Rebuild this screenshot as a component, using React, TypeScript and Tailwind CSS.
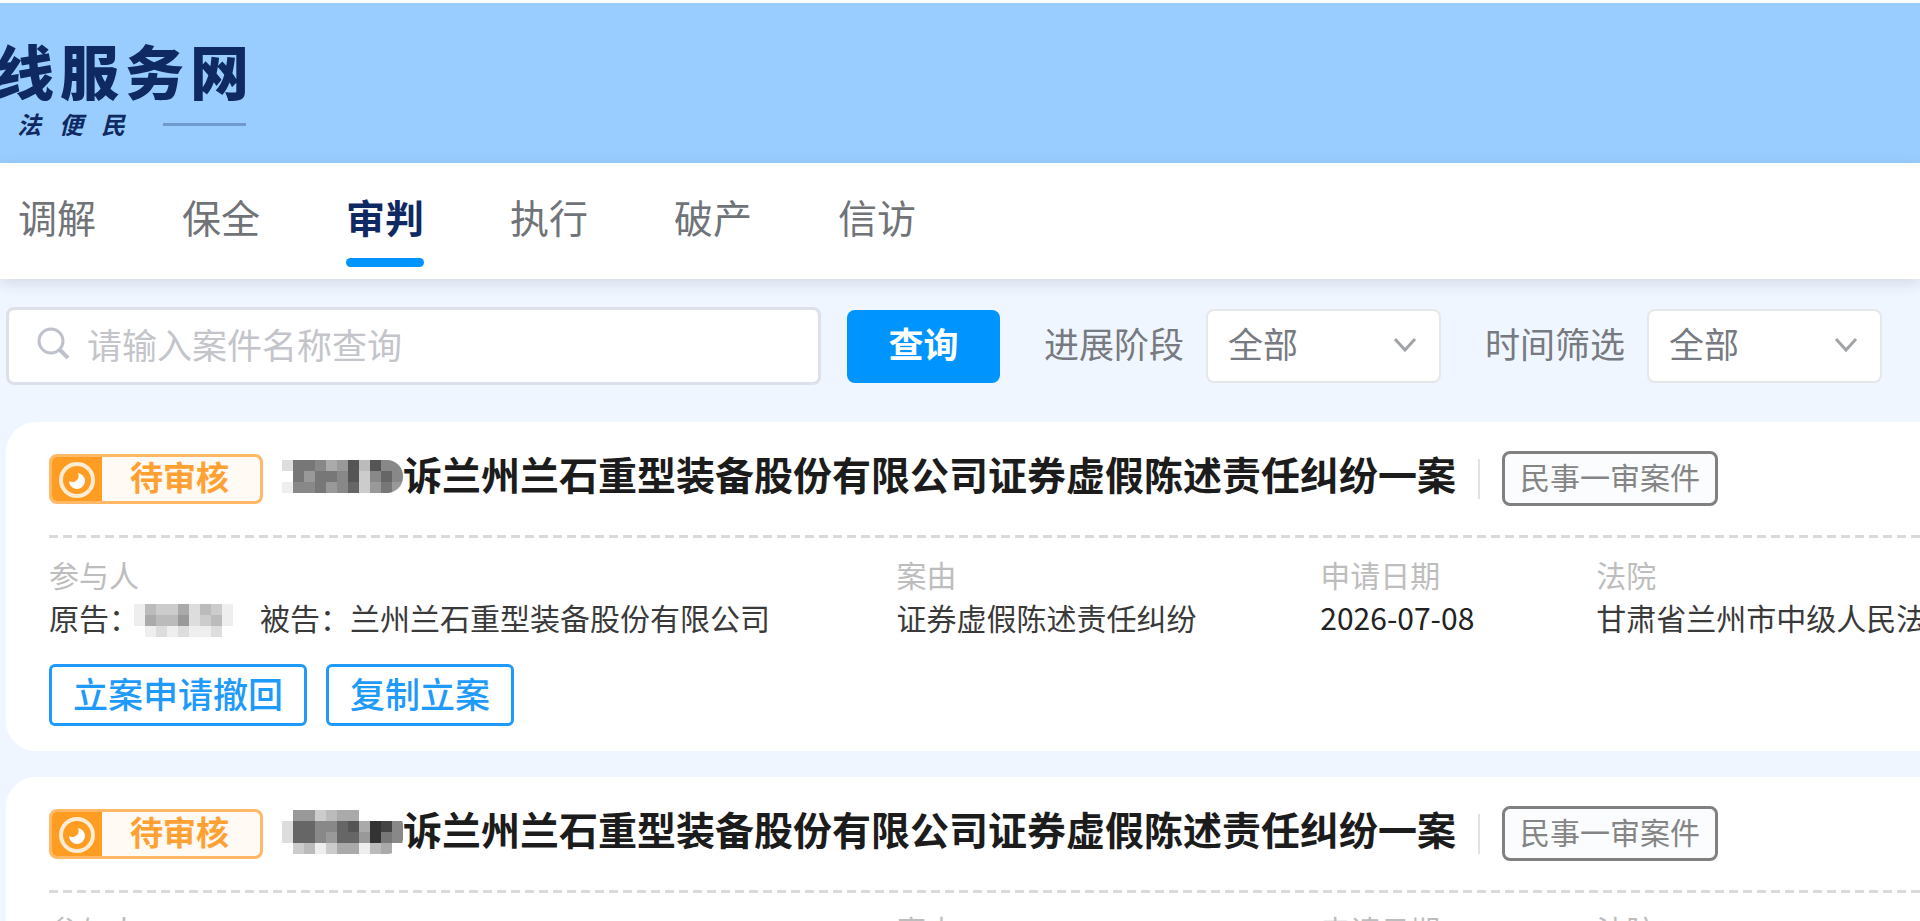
import { useState, type FormEvent } from 'react';

const TABS = ['调解', '保全', '审判', '执行', '破产', '信访'];

type Case = {
  id: number;
  title: string;
  status: string;
  kind: string;
  defendant: string;
  cause: string;
  date: string;
  court: string;
  titleMask: string[];
  nameMask: string[];
};

// each character is one block, 0 = darkest, f = white
const TITLE_MASK_1 = ['d778a95b588', 'f797785c868', 'e887986c979'];
const TITLE_MASK_2 = ['f99cbaaffff', 'd668865a348', 'd6689669378', 'fcbecaaebaf'];
const NAME_MASK = ['ebccadbcef', 'eabb9dcbef', 'fededeedff'];

const BASE = {
  status: '待审核',
  title: '诉兰州兰石重型装备股份有限公司证券虚假陈述责任纠纷一案',
  kind: '民事一审案件',
  defendant: '兰州兰石重型装备股份有限公司',
  cause: '证券虚假陈述责任纠纷',
  date: '2026-07-08',
  court: '甘肃省兰州市中级人民法院',
  nameMask: NAME_MASK,
};

const CASES: Case[] = [
  { ...BASE, id: 1, titleMask: TITLE_MASK_1 },
  { ...BASE, id: 2, titleMask: TITLE_MASK_2 },
];

const CELL = 11;

const MaskedName = ({ rows, className }: { rows: string[]; className: string }) => (
  <svg
    className={className}
    viewBox={`0 0 ${rows[0].length} ${rows.length}`}
    width={rows[0].length * CELL}
    height={rows.length * CELL}
    shapeRendering="crispEdges"
    aria-hidden="true"
  >
    {rows.map((row, y) =>
      row.split('').map((c, x) => <rect key={`${x}-${y}`} x={x} y={y} width="1" height="1" fill={`#${c}${c}${c}`} />)
    )}
  </svg>
);

const StatusBadge = ({ text }: { text: string }) => (
  <span className="flex h-[50px] w-[214px] shrink-0 overflow-hidden rounded-lg border-3 border-[#ffb866] bg-[#fffaf3]">
    <span className="-m-[3px] flex w-[53px] items-center justify-center bg-[#ff9c22]">
      <svg width="40" height="40" viewBox="0 0 40 40" fill="none">
        <circle cx="21" cy="21" r="16" stroke="#ffecd2" strokeWidth="4" />
        <path d="M22 14a8 8 0 1 1-9 8c3 2 6 1 8-1 2-2 2-4 1-7z" fill="#fff" />
      </svg>
    </span>
    <span className="flex flex-1 items-center justify-center pb-[4px] text-[33px] leading-none font-bold text-[#ffa033]">{text}</span>
  </span>
);

const FilterSelect = ({ id, label }: { id: string; label: string }) => (
  <div className="flex items-center gap-[22px]">
    <label htmlFor={id} className="pb-[6px] whitespace-nowrap text-[#777a80]">{label}</label>
    <div className="relative">
      <select
        id={id}
        className="h-[74px] w-[235px] appearance-none rounded-lg border-2 border-[#e6e7e9] bg-white pb-[6px] pl-[20px] text-[#777a80] outline-none"
      >
        <option>全部</option>
      </select>
      <svg className="pointer-events-none absolute top-[28px] right-[24px]" width="24" height="16" viewBox="0 0 24 16" fill="none">
        <path d="M2 2l10 11L22 2" stroke="#a0a3a8" strokeWidth="3" />
      </svg>
    </div>
  </div>
);

const CaseCard = ({ item }: { item: Case }) => (
  <article className="h-[329px] overflow-hidden rounded-l-[30px] bg-white pt-[29px] pl-[43px]">
    <div className="flex h-[55px] items-center">
      <StatusBadge text={item.status} />
      <h2 className="ml-[19px] flex items-center pb-[12px] text-[39px] leading-[48px] font-bold whitespace-nowrap text-[#1c1c1c]">
        <MaskedName rows={item.titleMask} className="mt-[8px] rounded-r-[16px]" />
        {item.title}
      </h2>
      <span className="ml-[22px] h-[40px] w-[2px] bg-[#e2e2e2]" />
      <span className="ml-[22px] flex h-[55px] w-[216px] items-center justify-center rounded-lg border-3 border-[#808080] bg-[#fafcfd] pb-[4px] text-[30px] whitespace-nowrap text-[#858585]">
        {item.kind}
      </span>
    </div>
    <div className="mt-[29px] h-[3px] bg-[repeating-linear-gradient(90deg,#dadada_0_9px,transparent_9px_14px)]" />
    <dl className="mt-[15px] grid grid-cols-[848fr_424fr_276fr_minmax(0,324fr)] text-[30px] leading-[43px] whitespace-nowrap text-[#3a3a3a]">
      <div>
        <dt className="text-[#bdbdbd]">参与人</dt>
        <dd className="flex items-center">
          原告：
          <MaskedName rows={item.nameMask} className="mt-[6px] mr-[16px] -ml-[5px] rounded-r-[16px]" />
          被告：{item.defendant}
        </dd>
      </div>
      <div>
        <dt className="text-[#bdbdbd]">案由</dt>
        <dd>{item.cause}</dd>
      </div>
      <div>
        <dt className="text-[#bdbdbd]">申请日期</dt>
        <dd className="text-[#222]">{item.date}</dd>
      </div>
      <div>
        <dt className="text-[#bdbdbd]">法院</dt>
        <dd>{item.court}</dd>
      </div>
    </dl>
    <div className="mt-[25px] flex gap-[19px] text-[35px] leading-[52px] font-medium text-[#1e9bfa]">
      <button type="button" className="rounded-md border-3 px-[21px] pb-[4px]">立案申请撤回</button>
      <button type="button" className="rounded-md border-3 px-[21px] pb-[4px]">复制立案</button>
    </div>
  </article>
);

export default function App() {
  const [tab, setTab] = useState('审判');
  const [query, setQuery] = useState('');

  const handleSearch = (e: FormEvent) => {
    e.preventDefault();
  };

  return (
    <div className="h-screen overflow-hidden bg-[#f0f6ff] font-['Noto_Sans_CJK_SC',sans-serif]">
      {/* Site header */}
      <header className="h-[163px] border-t-3 border-white bg-[#9acdff] pt-[36px] text-[#0f2a62]">
        <div className="-ml-[5px] flex gap-[6px] text-[59px] leading-[62px] font-black whitespace-nowrap">
          <span>线</span>
          <span>服</span>
          <span>务</span>
          <span>网</span>
        </div>
        <div className="mt-[9px] flex items-center pl-[17px] text-[24px] leading-[28px] font-bold">
          <span className="flex gap-[18px] italic">
            <span>法</span>
            <span>便</span>
            <span>民</span>
          </span>
          <span className="ml-[38px] h-[3px] w-[83px] bg-[#7099cf]" />
        </div>
      </header>

      <nav className="relative flex h-[116px] gap-[86px] bg-white pl-[18px] text-[39px] shadow-[0_4px_14px_rgba(60,70,100,0.16)]">
        {TABS.map((name) => (
          <button
            key={name}
            type="button"
            onClick={() => setTab(name)}
            className={
              name === tab
                ? 'flex flex-col items-center pt-[25px] leading-[56px] font-bold text-[#0f2a62]'
                : 'flex flex-col items-center pt-[25px] leading-[56px] text-[#707377]'
            }
          >
            {name}
            {name === tab && <span className="mt-[14px] h-[9px] w-full rounded-full bg-[#0094ff]" />}
          </button>
        ))}
      </nav>

      {/* Search and filters */}
      <form onSubmit={handleSearch} className="flex items-center pt-[28px] pl-[6px] text-[35px]">
        <div className="relative">
          <input
            type="text"
            aria-label="案件名称"
            placeholder="请输入案件名称查询"
            value={query}
            onChange={(e) => setQuery(e.target.value)}
            className="h-[78px] w-[815px] rounded-lg border-3 border-[#dde0ea] bg-white pb-[6px] pl-[78px] text-[#555] outline-none placeholder:text-[#c3c5ca]"
          />
          <svg className="pointer-events-none absolute top-[20px] left-[31px]" width="35" height="35" viewBox="0 0 35 35" fill="none" stroke="#bfc2cc" strokeWidth="3">
            <circle cx="14" cy="14" r="12" />
            <path d="M22 22l9 9" strokeWidth="4" />
          </svg>
        </div>
        <button type="submit" className="ml-[26px] h-[73px] w-[153px] rounded-lg bg-[#0094ff] pb-[6px] font-bold text-white">
          查询
        </button>
        <div className="ml-[44px] flex gap-[44px]">
          <FilterSelect id="stage" label="进展阶段" />
          <FilterSelect id="time" label="时间筛选" />
        </div>
      </form>

      <main className="mt-[37px] flex flex-col gap-[26px] pl-[6px]">
        {CASES.map((item) => (
          <CaseCard key={item.id} item={item} />
        ))}
      </main>
    </div>
  );
}
